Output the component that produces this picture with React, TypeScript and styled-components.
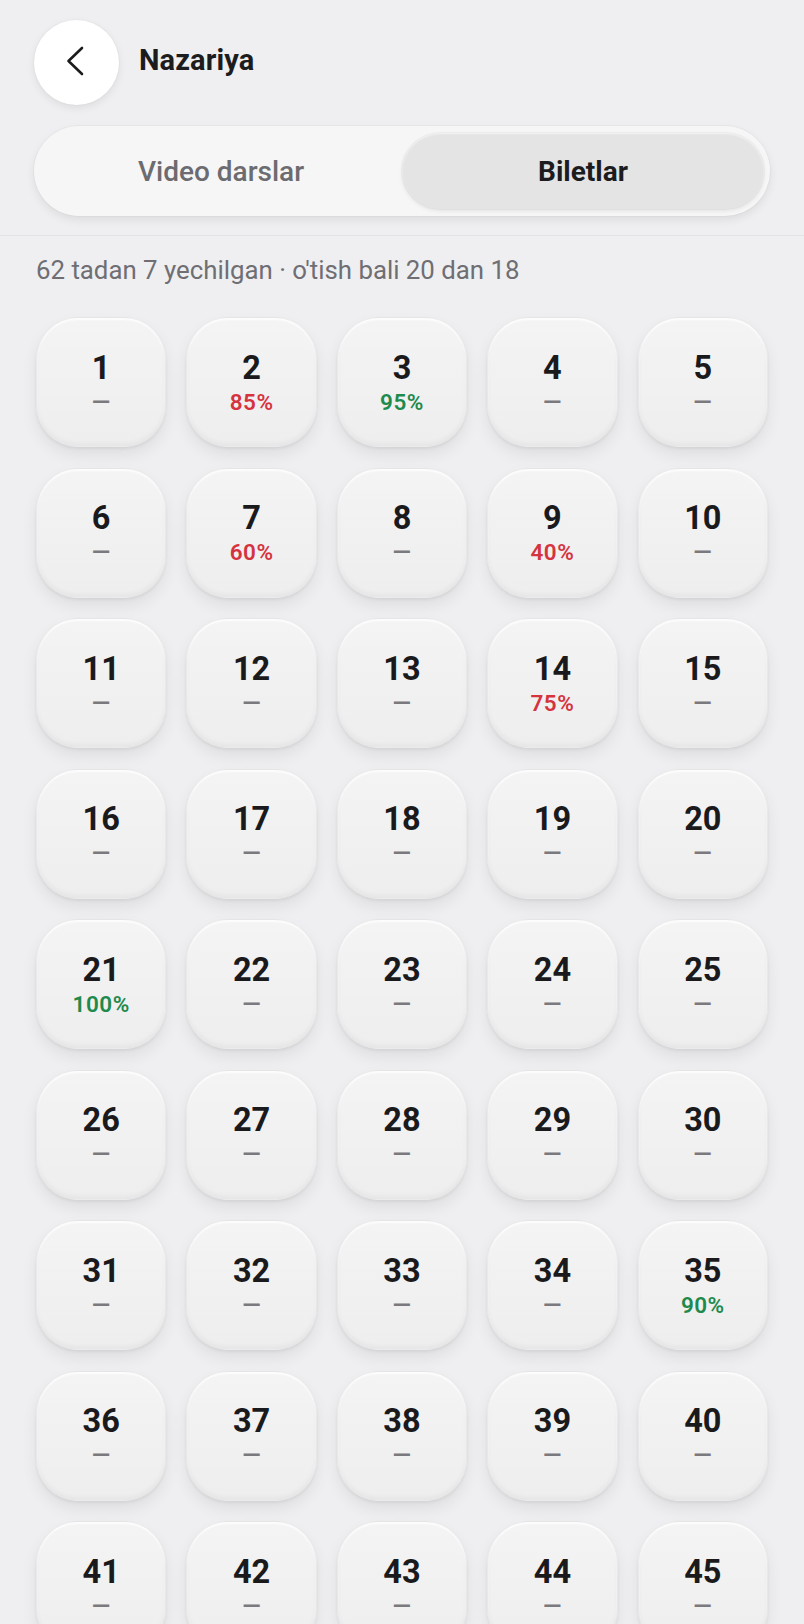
import React from 'react';
import styled, { createGlobalStyle } from 'styled-components';

const GlobalStyle = createGlobalStyle`
  html, body {
    margin: 0;
    padding: 0;
    background: #efeff1;
  }
  body {
    font-family: Roboto, "Noto Sans", "Liberation Sans", sans-serif;
    -webkit-font-smoothing: antialiased;
  }
`;

type Ticket = { id: number; score?: number };

const PASS = 90;
const scores: Record<number, number> = { 2: 85, 3: 95, 7: 60, 9: 40, 14: 75, 21: 100, 35: 90 };
const tickets: Ticket[] = Array.from({ length: 62 }, (_, i) => ({ id: i + 1, score: scores[i + 1] }));

const Page = styled.div`
  min-height: 100vh;
  background: #efeff1;
  color: #1c1c1e;
`;

const Top = styled.div`
  padding: 20px 34px 0;
`;

const Header = styled.header`
  display: flex;
  align-items: center;
  gap: 20px;
`;

const BackButton = styled.button`
  width: 85px;
  height: 85px;
  border-radius: 50%;
  border: none;
  background: #ffffff;
  box-shadow: 0 3px 8px rgba(0, 0, 0, 0.08), 0 0 0 1px rgba(0, 0, 0, 0.02);
  display: flex;
  align-items: center;
  justify-content: center;
  padding: 0 4px 4px 0;
  cursor: pointer;
`;

const Title = styled.h1`
  margin: 0 0 5px;
  font-size: 29px;
  font-weight: 700;
  color: #1c1c1e;
  letter-spacing: 0.1px;
`;

const Segmented = styled.div`
  margin-top: 21px;
  height: 90px;
  box-sizing: border-box;
  padding: 7px 6px;
  border-radius: 45px;
  background: #f6f6f6;
  box-shadow: 0 4px 10px rgba(0, 0, 0, 0.08), 0 0 0 1px rgba(0, 0, 0, 0.025);
  display: flex;
`;

const SegButton = styled.button<{ $active?: boolean }>`
  flex: 1;
  border: none;
  border-radius: 40px;
  font-family: inherit;
  font-size: 28px;
  font-weight: ${p => (p.$active ? 700 : 500)};
  color: ${p => (p.$active ? '#1c1c1e' : '#6b6b70')};
  background: ${p => (p.$active ? '#e4e4e5' : 'transparent')};
  box-shadow: ${p =>
    p.$active
      ? 'inset 0 1px 2px rgba(255,255,255,0.6), 0 2px 4px rgba(0,0,0,0.08), 0 0 0 1px rgba(0,0,0,0.03)'
      : 'none'};
  cursor: pointer;
`;

const Divider = styled.div`
  margin-top: 19px;
  height: 1px;
  background: #e3e3e6;
`;

const Content = styled.main`
  padding: 19px 36px 40px;
`;

const Summary = styled.p`
  margin: 0;
  font-size: 25.8px;
  line-height: 30px;
  color: #6e6e73;
`;

const Grid = styled.div`
  margin-top: 32px;
  display: grid;
  grid-template-columns: repeat(5, 1fr);
  column-gap: 20px;
  row-gap: 20.5px;
`;

const Tile = styled.button`
  height: 130px;
  border-radius: 42px;
  border: 1px solid rgba(0, 0, 0, 0.035);
  background: linear-gradient(180deg, #f4f4f5 0%, #eeeeef 100%);
  box-shadow:
    0 8px 16px rgba(0, 0, 0, 0.07),
    0 2px 3px rgba(0, 0, 0, 0.06),
    inset 0 -3px 4px rgba(0, 0, 0, 0.035),
    inset 0 2px 2px rgba(255, 255, 255, 0.8);
  display: flex;
  flex-direction: column;
  align-items: center;
  justify-content: center;
  gap: 3px;
  padding: 0;
  font-family: inherit;
  cursor: pointer;
`;

const Num = styled.span`
  font-size: 32.5px;
  line-height: 36px;
  font-weight: 700;
  color: #1a1a1c;
`;

const Score = styled.span<{ $pass?: boolean; $empty?: boolean }>`
  font-size: ${p => (p.$empty ? '24px' : '22.5px')};
  line-height: 26px;
  font-weight: 600;
  letter-spacing: 0.5px;
  color: ${p => (p.$empty ? '#7a7a7e' : p.$pass ? '#1e8a4c' : '#d5343f')};
`;

const ChevronLeft = () => (
  <svg width="18" height="30" viewBox="0 0 18 30" fill="none">
    <path d="M16 2 L2.5 15 L16 28" stroke="#1c1c1e" strokeWidth="2.6" strokeLinecap="round" strokeLinejoin="round" />
  </svg>
);

export default function App() {
  return (
    <Page>
      <GlobalStyle />
      <Top>
        <Header>
          <BackButton aria-label="Orqaga">
            <ChevronLeft />
          </BackButton>
          <Title>Nazariya</Title>
        </Header>
        <Segmented>
          <SegButton>Video darslar</SegButton>
          <SegButton $active>Biletlar</SegButton>
        </Segmented>
      </Top>
      <Divider />
      <Content>
        <Summary>62 tadan 7 yechilgan · o'tish bali 20 dan 18</Summary>
        <Grid>
          {tickets.map(t => (
            <Tile key={t.id}>
              <Num>{t.id}</Num>
              {t.score === undefined ? (
                <Score $empty>—</Score>
              ) : (
                <Score $pass={t.score >= PASS}>{t.score}%</Score>
              )}
            </Tile>
          ))}
        </Grid>
      </Content>
    </Page>
  );
}
